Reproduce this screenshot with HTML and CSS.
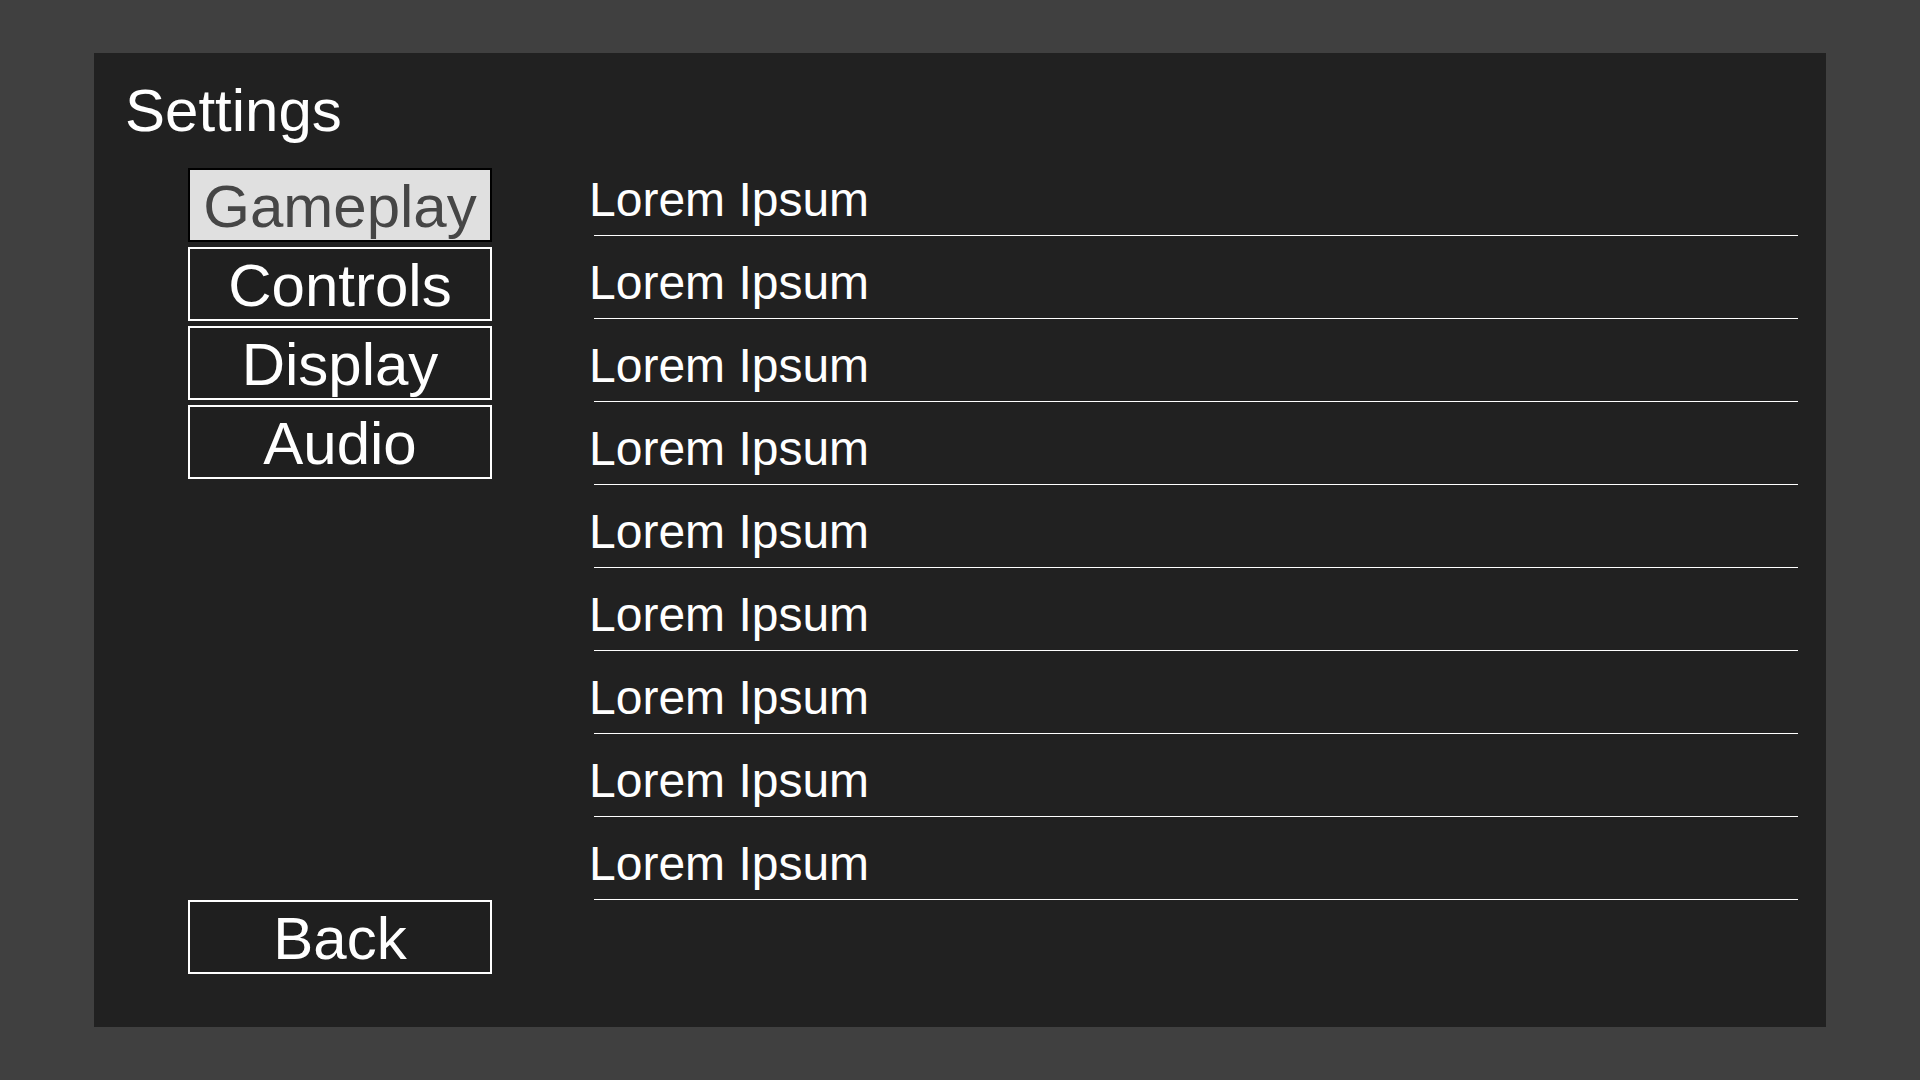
FILE: index.html
```html
<!DOCTYPE html>
<html>
<head>
<meta charset="utf-8">
<link rel="stylesheet" href="styles.css">
</head>
<body>
<div class="panel">
  <div class="title">Settings</div>
  <div class="content">
    <nav class="nav">
      <div class="btn active">Gameplay</div>
      <div class="btn">Controls</div>
      <div class="btn">Display</div>
      <div class="btn">Audio</div>
      <div class="btn back">Back</div>
    </nav>
    <div class="list">
      <div class="row"><span>Lorem Ipsum</span></div>
      <div class="row"><span>Lorem Ipsum</span></div>
      <div class="row"><span>Lorem Ipsum</span></div>
      <div class="row"><span>Lorem Ipsum</span></div>
      <div class="row"><span>Lorem Ipsum</span></div>
      <div class="row"><span>Lorem Ipsum</span></div>
      <div class="row"><span>Lorem Ipsum</span></div>
      <div class="row"><span>Lorem Ipsum</span></div>
      <div class="row"><span>Lorem Ipsum</span></div>
    </div>
  </div>
</div>
</body>
</html>
```
FILE: styles.css
```css
html, body {
  margin: 0;
  padding: 0;
  background: #404040;
  font-family: "Liberation Sans", Arial, sans-serif;
  color: #ffffff;
}
.panel {
  box-sizing: border-box;
  width: 1732px;
  height: 974px;
  margin: 53px 0 0 94px;
  background: #212121;
  padding: 29px 28px 53px 31px;
  display: flex;
  flex-direction: column;
}
.title {
  font-size: 60px;
  line-height: 58px;
  height: 58px;
}
.content {
  display: flex;
  flex: 1;
  margin-top: 13px;
}
.nav {
  width: 304px;
  margin-left: 63px;
  margin-top: 15px;
  display: flex;
  flex-direction: column;
  gap: 5px;
}
.btn {
  box-sizing: border-box;
  height: 74px;
  border: 2px solid #ffffff;
  background: #1f1f1f;
  font-size: 60px;
  line-height: 67px;
  padding-top: 3px;
  text-align: center;
  white-space: nowrap;
}
.btn.active {
  background: #e0e0e0;
  border-color: #000000;
  color: #464646;
}
.btn.back {
  margin-top: auto;
}
.list {
  flex: 1;
  margin-left: 97px;
  display: flex;
  flex-direction: column;
}
.row {
  margin-left: 5px;
  height: 83px;
  box-sizing: border-box;
  padding: 21px 0 9px;
  border-bottom: 1px solid #ffffff;
  font-size: 48px;
  line-height: 52px;
}
.row span {
  margin-left: -5px;
}
```
